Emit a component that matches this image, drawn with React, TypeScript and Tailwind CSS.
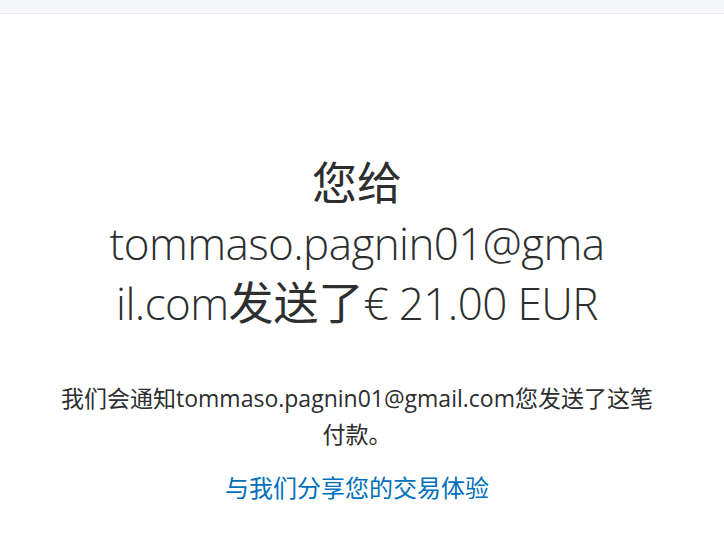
import React from "react";

const cjk = "font-normal text-[45px] tracking-normal";

export default function App() {
  return (
    <div className="min-h-screen bg-white text-[#2c2e2f] [font-family:'Open_Sans','Noto_Sans_CJK_SC',sans-serif]">
      <div className="h-[14px] bg-[#f5f7fa] border-b border-[#eaecf0]" />
      <main className="flex flex-col items-center pr-[10px] pt-[139px]">
        <h1 className="w-[499px] text-center text-[44px] leading-[60px] font-light tracking-[-0.6px] [overflow-wrap:anywhere]">
          <span className={cjk}>您给</span>tommaso.pagnin01@gmail.com
          <span className={cjk}>发送了</span>€ 21.00 EUR
        </h1>
        <p className="mt-[47px] w-[600px] text-center text-[23px] leading-[36px]">
          我们会通知tommaso.pagnin01@gmail.com您发送了这笔付款。
        </p>
        <a href="#" className="mt-[18px] text-[24px] leading-[36px] text-[#0070ba]">
          与我们分享您的交易体验
        </a>
      </main>
    </div>
  );
}
